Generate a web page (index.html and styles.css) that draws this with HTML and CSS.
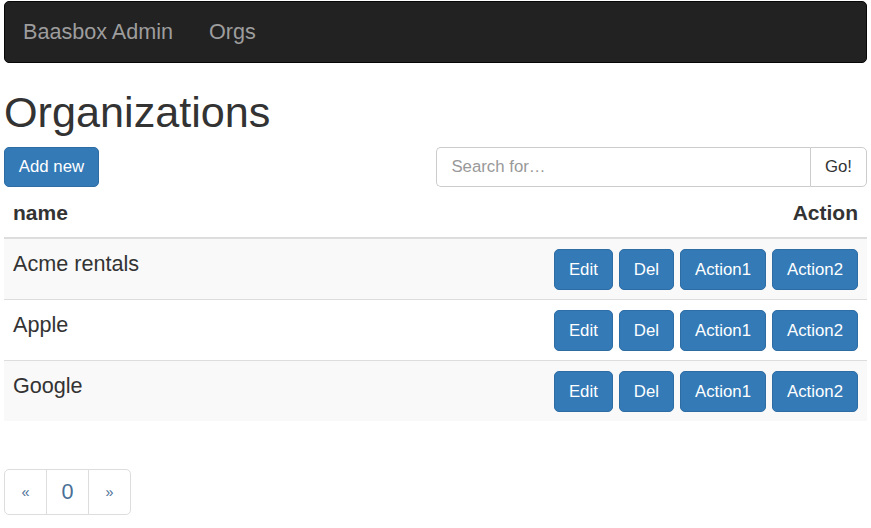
FILE: index.html
```html
<!DOCTYPE html>
<html lang="en">
<head>
<meta charset="utf-8">
<title>Baasbox Admin - Organizations</title>
<link rel="stylesheet" href="styles.css">
</head>
<body>
<div class="page">
  <nav class="navbar">
    <a class="brand" href="#">Baasbox Admin</a>
    <a class="nav-link" href="#">Orgs</a>
  </nav>

  <h1 class="title">Organizations</h1>

  <div class="toolbar">
    <button class="btn btn-primary add" type="button">Add new</button>
    <div class="input-group">
      <input class="search" type="text" placeholder="Search for…">
      <button class="btn btn-default go" type="button">Go!</button>
    </div>
  </div>

  <table class="table">
    <thead>
      <tr>
        <th class="col-name">name</th>
        <th class="col-action">Action</th>
      </tr>
    </thead>
    <tbody>
      <tr class="odd">
        <td class="cell-name">Acme rentals</td>
        <td class="cell-actions"><div class="actions"><button class="btn btn-primary">Edit</button><button class="btn btn-primary">Del</button><button class="btn btn-primary">Action1</button><button class="btn btn-primary">Action2</button></div></td>
      </tr>
      <tr>
        <td class="cell-name">Apple</td>
        <td class="cell-actions"><div class="actions"><button class="btn btn-primary">Edit</button><button class="btn btn-primary">Del</button><button class="btn btn-primary">Action1</button><button class="btn btn-primary">Action2</button></div></td>
      </tr>
      <tr class="odd">
        <td class="cell-name">Google</td>
        <td class="cell-actions"><div class="actions"><button class="btn btn-primary">Edit</button><button class="btn btn-primary">Del</button><button class="btn btn-primary">Action1</button><button class="btn btn-primary">Action2</button></div></td>
      </tr>
    </tbody>
  </table>

  <ul class="pagination">
    <li><a href="#" class="page-arrow">«</a></li>
    <li><a href="#" class="page-num">0</a></li>
    <li><a href="#" class="page-arrow">»</a></li>
  </ul>
</div>
</body>
</html>
```

FILE: styles.css
```css
html, body {
  margin: 0;
  padding: 0;
  background: #fff;
}

body {
  font-family: "Liberation Sans", Arial, sans-serif;
  font-size: 16.8px;
  color: #333;
}

.page {
  padding: 1px 4px 0;
}

/* Navbar */
.navbar {
  display: flex;
  align-items: flex-start;
  height: 62px;
  box-sizing: border-box;
  background: #222;
  border: 1px solid #080808;
  border-radius: 5px;
}

.brand,
.nav-link {
  display: block;
  padding: 18px;
  line-height: 24px;
  font-size: 21.6px;
  color: #9d9d9d;
  text-decoration: none;
}

/* Title */
.title {
  margin: 25px 0 11px;
  font-size: 43.2px;
  line-height: 48px;
  font-weight: 500;
  color: #333;
}

/* Toolbar */
.toolbar {
  display: flex;
  justify-content: space-between;
  align-items: center;
}

.btn {
  display: inline-flex;
  align-items: center;
  justify-content: center;
  height: 40px;
  box-sizing: border-box;
  padding: 0 14px;
  font-family: "Liberation Sans", Arial, sans-serif;
  font-size: 16.8px;
  border: 1px solid transparent;
  border-radius: 5px;
  cursor: pointer;
}

.btn-primary {
  background: #337ab7;
  border-color: #2e6da4;
  color: #fff;
}

.btn-default {
  background: #fff;
  border-color: #ccc;
  color: #333;
}

.add {
  width: 95px;
  padding: 0;
}

.input-group {
  display: flex;
  width: 431px;
  height: 40px;
}

.search {
  flex: 1;
  min-width: 0;
  height: 40px;
  box-sizing: border-box;
  padding: 0 14.4px;
  border: 1px solid #ccc;
  border-right: 0;
  border-radius: 5px 0 0 5px;
  font-family: "Liberation Sans", Arial, sans-serif;
  font-size: 16.8px;
  color: #555;
  outline: none;
}

.search::placeholder {
  color: #999;
}

.go {
  width: 57px;
  padding: 0;
  border-radius: 0 5px 5px 0;
}

/* Table */
.table {
  width: 100%;
  border-collapse: collapse;
  border-spacing: 0;
  margin: 0 0 24px;
}

.table th {
  padding: 14px 9px 12px 9px;
  line-height: 24px;
  font-size: 21px;
  font-weight: bold;
  color: #333;
  border-bottom: 2px solid #ddd;
}

.col-name {
  text-align: left;
}

.col-action {
  text-align: right;
}

.table td {
  padding: 10px 9px 9px 9px;
  vertical-align: top;
  border-top: 1px solid #ddd;
}

.table tbody tr:first-child td {
  border-top: 0;
}

.table tr.odd td {
  background: #f9f9f9;
}

.cell-name {
  font-size: 21.6px;
  line-height: 30px;
  color: #333;
}

.actions {
  display: flex;
  justify-content: flex-end;
  gap: 6px;
}

.actions .btn {
  height: 41px;
}

/* Pagination */
.pagination {
  display: inline-flex;
  list-style: none;
  margin: 24px 0 0;
  padding: 0;
}

.pagination li a {
  display: flex;
  align-items: center;
  justify-content: center;
  width: 43px;
  height: 46px;
  box-sizing: border-box;
  margin-left: -1px;
  border: 1px solid #ddd;
  color: #4a6f96;
  text-decoration: none;
  background: #fff;
}

.pagination li:first-child a {
  margin-left: 0;
  border-radius: 5px 0 0 5px;
}

.pagination li:last-child a {
  border-radius: 0 5px 5px 0;
}

.page-arrow {
  font-size: 14.4px;
}

.page-num {
  font-size: 21.6px;
}
```
